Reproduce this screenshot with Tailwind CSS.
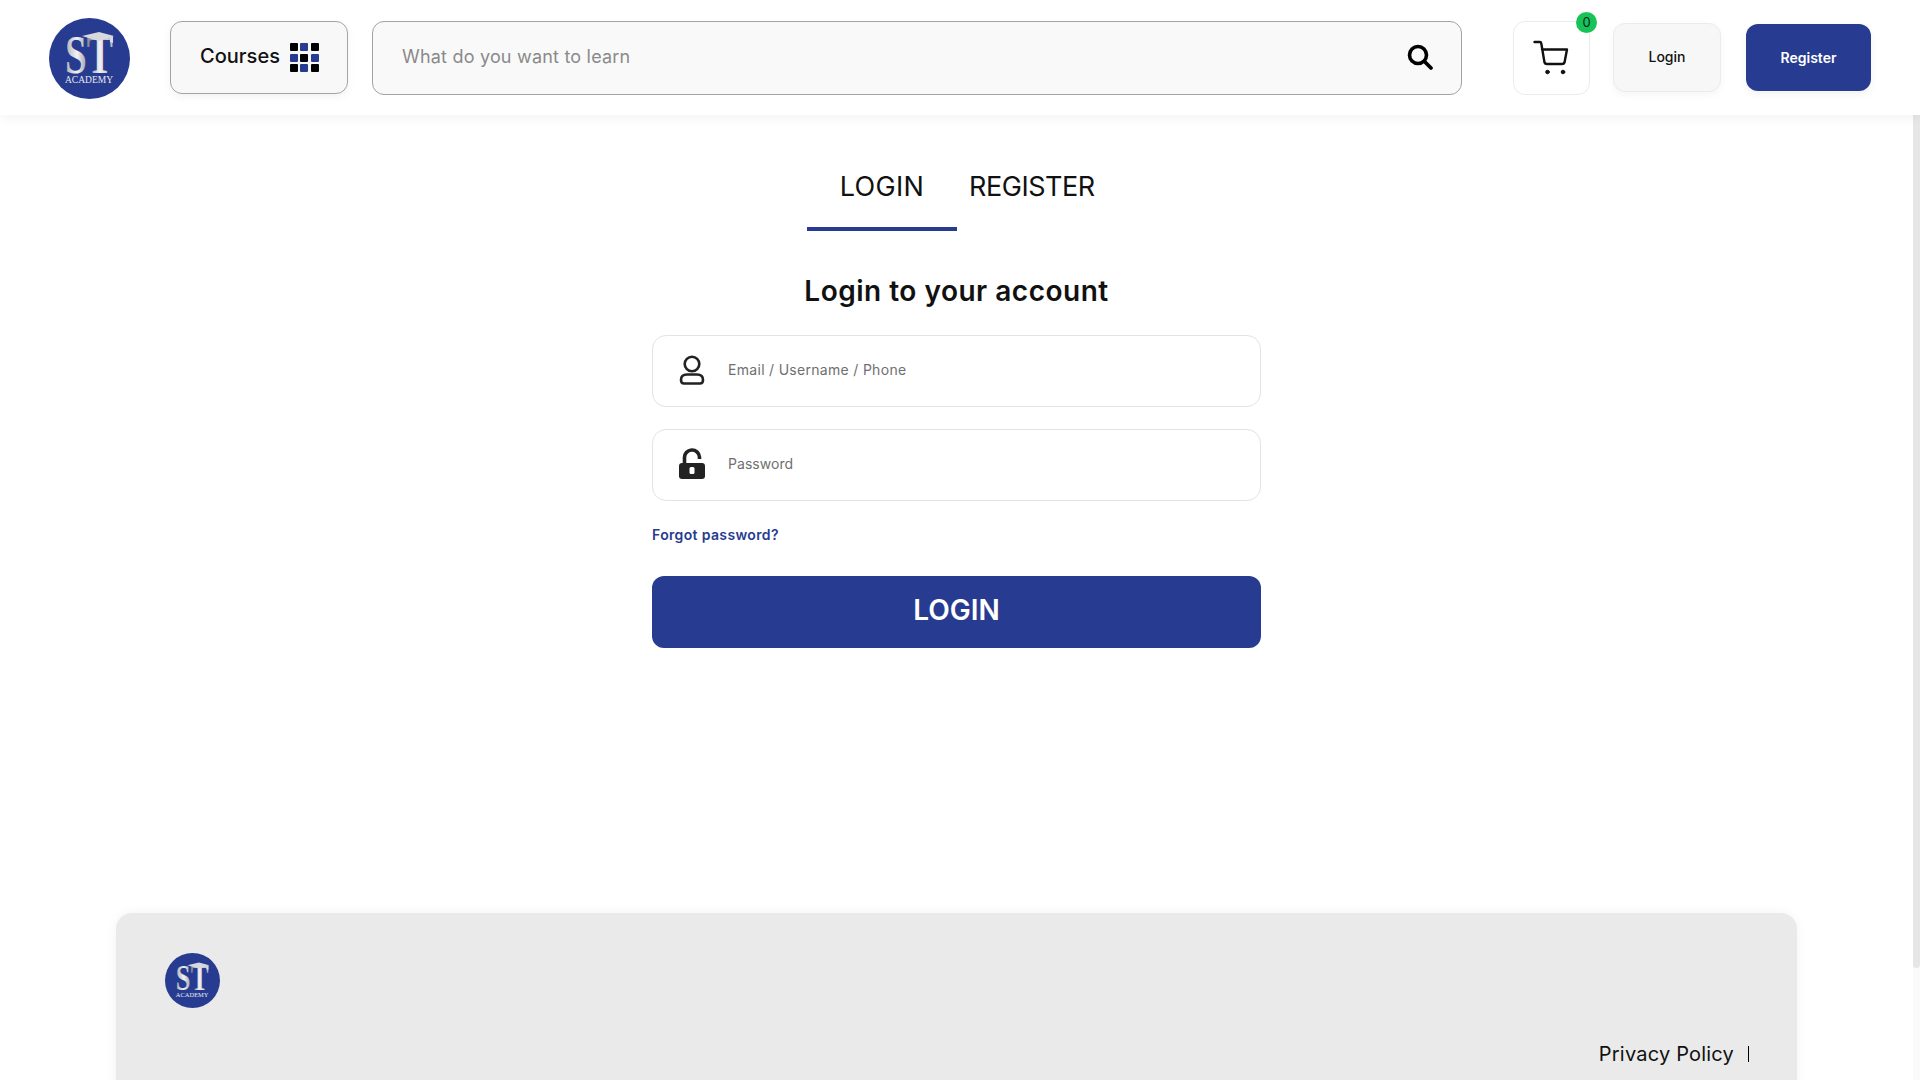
<!DOCTYPE html>
<html lang="en">
<head>
    <meta charset="UTF-8">
    <title>ST Academy Login</title>
    <script src="https://cdn.jsdelivr.net/npm/@tailwindcss/browser@4"></script>
</head>
<body class="bg-white">
    <div class="h-screen overflow-hidden flex flex-col [font-family:Inter,sans-serif] text-[#111]">
        <!-- Header -->
        <header class="relative z-10 h-[115px] shrink-0 bg-white shadow-[0_2px_12px_rgba(0,0,0,0.06)] flex items-start pl-[49px] pt-[18px]">
            <svg class="w-[81px] h-[81px] shrink-0" viewBox="0 0 81 81">
                <defs>
                    <linearGradient id="steel" x1="0" x2="1" y1="0" y2="0">
                        <stop offset="0" stop-color="#a9abb4"/>
                        <stop offset="0.25" stop-color="#f4f4f6"/>
                        <stop offset="0.5" stop-color="#8a8c95"/>
                        <stop offset="0.72" stop-color="#f0f0f3"/>
                        <stop offset="1" stop-color="#b4b6be"/>
                    </linearGradient>
                </defs>
                <circle cx="40.5" cy="40.5" r="40.5" fill="#273c91"/>
                <text x="16" y="55" font-family="Liberation Serif" font-weight="700" font-size="54" fill="url(#steel)" textLength="48" lengthAdjust="spacingAndGlyphs">ST</text>
                <polygon points="33,18 50,14 65,18 50,23" fill="#d8d9de"/>
                <polygon points="61,19 64,18 64,25 61,24" fill="#d8d9de"/>
                <text x="40" y="65" text-anchor="middle" font-family="Liberation Serif" font-size="9.5" fill="#e8e9f0" textLength="48" lengthAdjust="spacingAndGlyphs">ACADEMY</text>
            </svg>

            <button class="ml-[40px] mt-[3px] w-[178px] h-[73px] pb-[3px] pl-[1px] rounded-[12px] border border-[#a3a3a3] bg-[#f8f8f8] shadow-[0_3px_8px_rgba(0,0,0,0.05)] flex items-center justify-center gap-[10px]">
                <span class="text-[20px] font-medium">Courses</span>
                <span class="grid grid-cols-3 gap-[2.5px] mt-[3px]">
                    <i class="block w-[8px] h-[8px] rounded-[1px] bg-black"></i>
                    <i class="block w-[8px] h-[8px] rounded-[1px] bg-[#273c91]"></i>
                    <i class="block w-[8px] h-[8px] rounded-[1px] bg-black"></i>
                    <i class="block w-[8px] h-[8px] rounded-[1px] bg-[#273c91]"></i>
                    <i class="block w-[8px] h-[8px] rounded-[1px] bg-black"></i>
                    <i class="block w-[8px] h-[8px] rounded-[1px] bg-[#273c91]"></i>
                    <i class="block w-[8px] h-[8px] rounded-[1px] bg-black"></i>
                    <i class="block w-[8px] h-[8px] rounded-[1px] bg-[#273c91]"></i>
                    <i class="block w-[8px] h-[8px] rounded-[1px] bg-black"></i>
                </span>
            </button>

            <div class="ml-[24px] mt-[3px] w-[1090px] h-[74px] pb-[3px] rounded-[12px] border border-[#a3a3a3] bg-[#f9f9f9] flex items-center justify-between pl-[29px] pr-[27px]">
                <span class="text-[18px] tracking-[0.2px] text-[#8a8a8a]">What do you want to learn</span>
                <svg class="w-[28px] h-[28px]" viewBox="0 0 28 28" fill="none" stroke="#000" stroke-linecap="round">
                    <circle cx="12" cy="12" r="8.5" stroke-width="3.6"/>
                    <path d="M18.5 18.5 L25 25" stroke-width="3.8"/>
                </svg>
            </div>

            <div class="relative ml-[51px] mt-[3px] w-[77px] h-[74px] pr-[2px] rounded-[12px] border border-[#ebebeb] bg-white flex items-center justify-center">
                <svg class="w-[36px] h-[36px]" viewBox="0 0 36 36" fill="none" stroke="#111" stroke-width="2.4" stroke-linecap="round" stroke-linejoin="round">
                    <path d="M1.5 2 H7 Q8 2 8.3 3.5 L11.5 22.5 Q12 24 14 24 H29 Q31 24 31.5 22.5 L34 9.5 H9"/>
                    <circle cx="14.5" cy="32" r="1.8" fill="#111" stroke-width="1"/>
                    <circle cx="30" cy="32" r="1.8" fill="#111" stroke-width="1"/>
                </svg>
                <span class="absolute -top-[10px] -right-[8px] w-[21px] h-[21px] rounded-full bg-[#16c455] flex items-center justify-center text-[13px] text-[#123]">0</span>
            </div>

            <button class="ml-[23px] mt-[5px] w-[108px] h-[69px] pb-[2px] rounded-[12px] border border-[#ebebeb] bg-[#f7f7f7] shadow-[0_3px_8px_rgba(0,0,0,0.04)] text-[14px] font-medium">Login</button>
            <button class="ml-[25px] mt-[6px] w-[125px] h-[67px] pb-[1px] rounded-[12px] bg-[#273c91] shadow-[0_3px_8px_rgba(0,0,0,0.06)] text-[14px] font-semibold text-white">Register</button>
        </header>

        <div class="flex-1 min-h-0 flex">
            <main class="flex-1 min-w-0 flex flex-col">
                <!-- Tabs -->
                <div class="flex justify-center h-[116px] pl-[1px]">
                    <div class="flex w-[300px] items-start">
                        <div class="w-[150px] h-[116px] border-b-[4px] border-[#273c91] flex justify-center pt-[55px] text-[27px] tracking-[0.3px] leading-[34px]">LOGIN</div>
                        <div class="flex-1 pl-[12px] pt-[55px] text-[27px] tracking-[-0.45px] leading-[34px]">REGISTER</div>
                    </div>
                </div>

                <!-- Login form -->
                <div class="w-[609px] mx-auto">
                    <h2 class="mt-[42px] text-center text-[28px] tracking-[0.5px] leading-[36px] font-semibold">Login to your account</h2>
                    <div class="mt-[26px] h-[72px] pb-[3px] rounded-[14px] border border-[#e2e2e8] flex items-center pl-[25px] gap-[22px]">
                        <svg class="w-[28px] h-[32px]" viewBox="0 0 28 32" fill="none" stroke="#222" stroke-width="2.6">
                            <circle cx="14" cy="10" r="7.3"/>
                            <path d="M3 26 Q3 20.5 9 20.5 H19 Q25 20.5 25 26 Q25 29.5 22 29.5 H6 Q3 29.5 3 26Z"/>
                        </svg>
                        <span class="text-[14px] tracking-[0.3px] text-[#6f6f6f]">Email / Username / Phone</span>
                    </div>
                    <div class="mt-[22px] h-[72px] pb-[3px] rounded-[14px] border border-[#e2e2e8] flex items-center pl-[25px] gap-[22px]">
                        <svg class="w-[28px] h-[32px]" viewBox="0 0 28 32" fill="none">
                            <path d="M6.5 16 V10 A7.5 7.5 0 0 1 21.5 9 V11" stroke="#222" stroke-width="3.6"/>
                            <rect x="1" y="15" width="26" height="16" rx="3" fill="#222"/>
                            <rect x="11.5" y="19" width="5" height="7" rx="1.5" fill="#fff"/>
                        </svg>
                        <span class="text-[14px] tracking-[0.05px] text-[#6f6f6f]">Password</span>
                    </div>
                    <a href="#" class="block mt-[24px] text-[14px] tracking-[0.35px] leading-[20px] font-semibold text-[#273c91]">Forgot password?</a>
                    <button class="mt-[31px] w-full h-[72px] pb-[5px] rounded-[12px] bg-[#273c91] text-white text-[28px] font-semibold">LOGIN</button>
                </div>

                <!-- Footer -->
                <footer class="mt-[265px] mx-[116px] h-[300px] shrink-0 rounded-t-[16px] bg-[#eaeaea] shadow-[0_0_12px_rgba(0,0,0,0.05)] pl-[49px] pr-[48px] pt-[40px]">
                    <svg class="w-[55px] h-[55px]" viewBox="0 0 81 81">
                        <circle cx="40.5" cy="40.5" r="40.5" fill="#273c91"/>
                        <text x="16" y="55" font-family="Liberation Serif" font-weight="700" font-size="54" fill="url(#steel)" textLength="48" lengthAdjust="spacingAndGlyphs">ST</text>
                        <polygon points="33,18 50,14 65,18 50,23" fill="#d8d9de"/>
                        <polygon points="61,19 64,18 64,25 61,24" fill="#d8d9de"/>
                        <text x="40" y="65" text-anchor="middle" font-family="Liberation Serif" font-size="9.5" fill="#e8e9f0" textLength="48" lengthAdjust="spacingAndGlyphs">ACADEMY</text>
                    </svg>
                    <div class="mt-[32px] flex justify-end items-center">
                        <a href="#" class="text-[20px] tracking-[0.2px] leading-[28px]">Privacy Policy</a>
                        <span class="ml-[14px] w-[1px] h-[16px] bg-black"></span>
                    </div>
                </footer>
            </main>

            <!-- Scrollbar -->
            <div class="w-[7px] shrink-0 bg-[#fafafa]">
                <div class="h-[853px] rounded-b-[4px] bg-[#e6e6e6]"></div>
            </div>
        </div>
    </div>
</body>
</html>
